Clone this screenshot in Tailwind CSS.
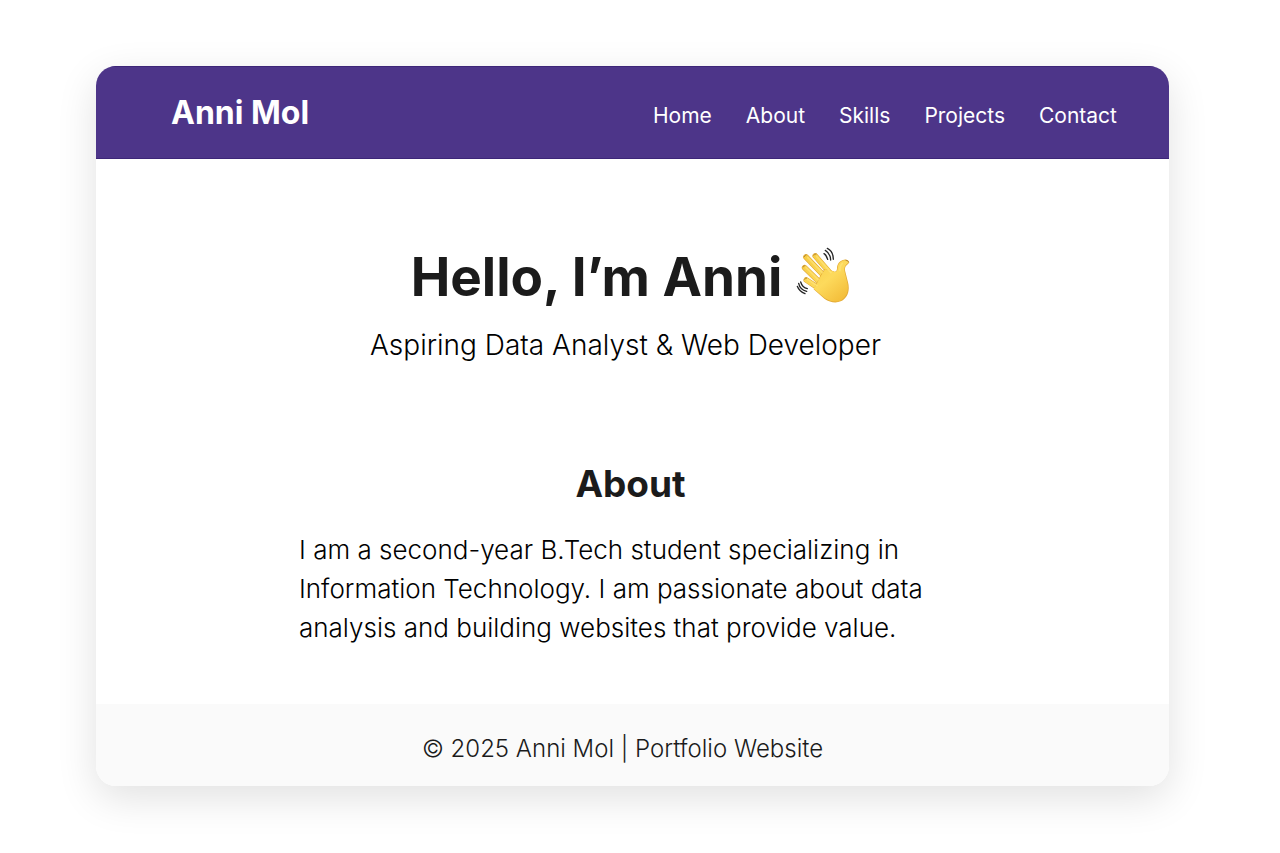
<!DOCTYPE html>
<html lang="en">
<head>
<meta charset="utf-8">
<meta name="viewport" content="width=device-width, initial-scale=1">
<title>Anni Mol | Portfolio Website</title>
<script src="https://cdn.jsdelivr.net/npm/@tailwindcss/browser@4"></script>
</head>
<body class="min-h-screen bg-white px-6 py-[66px] font-['Inter',sans-serif] text-[#1b1b1b] lg:pr-[111px] lg:pl-24">
<div class="overflow-hidden rounded-[20px] bg-white shadow-[0_12px_40px_rgba(0,0,0,0.12)]">
  <header class="flex flex-wrap items-center justify-between gap-4 border-y border-[#3d2678] bg-[#4d3589] px-[52px] pt-6 pb-[23px] text-white lg:pl-[75px]">
    <a href="#home" class="text-[32px] leading-[44px] font-bold">Anni Mol</a>
    <nav aria-label="Main" class="flex flex-wrap gap-[34px] pt-[6px] text-[21px] leading-[38px]">
      <a href="#home">Home</a>
      <a href="#about">About</a>
      <a href="#skills">Skills</a>
      <a href="#projects">Projects</a>
      <a href="#contact">Contact</a>
    </nav>
  </header>
  <main class="px-6">
    <section id="home" class="pt-[84px] text-center">
      <h1 class="flex items-center justify-center gap-[14px] pr-1 text-[53px] leading-[68px] font-bold">Hello, I’m Anni
        <svg class="mb-1 h-14 w-[54px] shrink-0" viewBox="45 35 162 168" role="img" aria-label="Waving hand">
          <defs>
            <linearGradient id="skin" gradientUnits="userSpaceOnUse" x1="70" y1="60" x2="190" y2="200">
              <stop offset="0" stop-color="#f6cb42"/>
              <stop offset="0.55" stop-color="#fdda5c"/>
              <stop offset="1" stop-color="#f2ba36"/>
            </linearGradient>
          </defs>
          <g fill="none" stroke-linecap="round">
            <path stroke="#dda22e" stroke-width="17" d="M103 62L155 122M75 65L137 130M71 97L122 147M76 134L115 160"/>
            <path stroke="url(#skin)" stroke-width="14" d="M103 62L155 122M75 65L137 130M71 97L122 147M76 134L115 160"/>
          </g>
          <path fill="#e3aa35" d="M106 146L117 123L130 101L156 107C164 112 168 107 168 99C168 85 177 75 190 73C201 71 208 80 201 86C193 92 190 98 193 109L201 141C208 168 198 189 179 198C163 205 146 200 131 191L98 162Z"/>
          <path fill="url(#skin)" d="M107 146L119 123L132 102L154 107C165 114 170 107 170 99C170 86 178 77 190 75C200 73 205 80 200 84C191 91 188 98 191 110L199 142C205 166 196 187 178 196C163 202 147 198 132 189L98 160Z"/>
          <g fill="none" stroke-linecap="round">
            <path stroke="#ffe680" stroke-width="5" opacity=".6" d="M107 63L150 112M80 66L124 112M75 97L112 133M79 132L108 151M184 84Q176 91 177 106"/>
            <path stroke="#b98a35" stroke-width="3" d="M98 60Q100 55 105 56M70 64Q70 59 75 59M66 95Q66 91 71 91M71 132Q72 128 77 128M195 75Q202 75 203 80"/>
            <path stroke="#262626" stroke-width="4" d="M139 39Q157 48 157 72M133 45Q148 54 149 74M129 55Q138 61 140 72M59 140Q64 157 79 160M53 144Q57 163 77 168M49 153Q55 169 72 175"/>
          </g>
        </svg>
      </h1>
      <p class="mt-4 pr-[14px] text-[28px] leading-9 font-light text-black">Aspiring Data Analyst &amp; Web Developer</p>
    </section>
    <section id="about" class="mx-auto max-w-[667px] pt-[95px] pb-[57px]">
      <h2 class="pr-1 text-center text-[37px] leading-[52px] font-bold">About</h2>
      <p class="mt-5 text-[26px] leading-[39px] font-light text-black">I am a second-year B.Tech student specializing in Information Technology. I am passionate about data analysis and building websites that provide value.</p>
    </section>
  </main>
  <footer class="bg-[#fafafa] pt-7 pr-11 pb-5 pl-6 text-center text-[24px] leading-[34px] font-light">© 2025 Anni Mol | Portfolio Website</footer>
</div>
</body>
</html>
